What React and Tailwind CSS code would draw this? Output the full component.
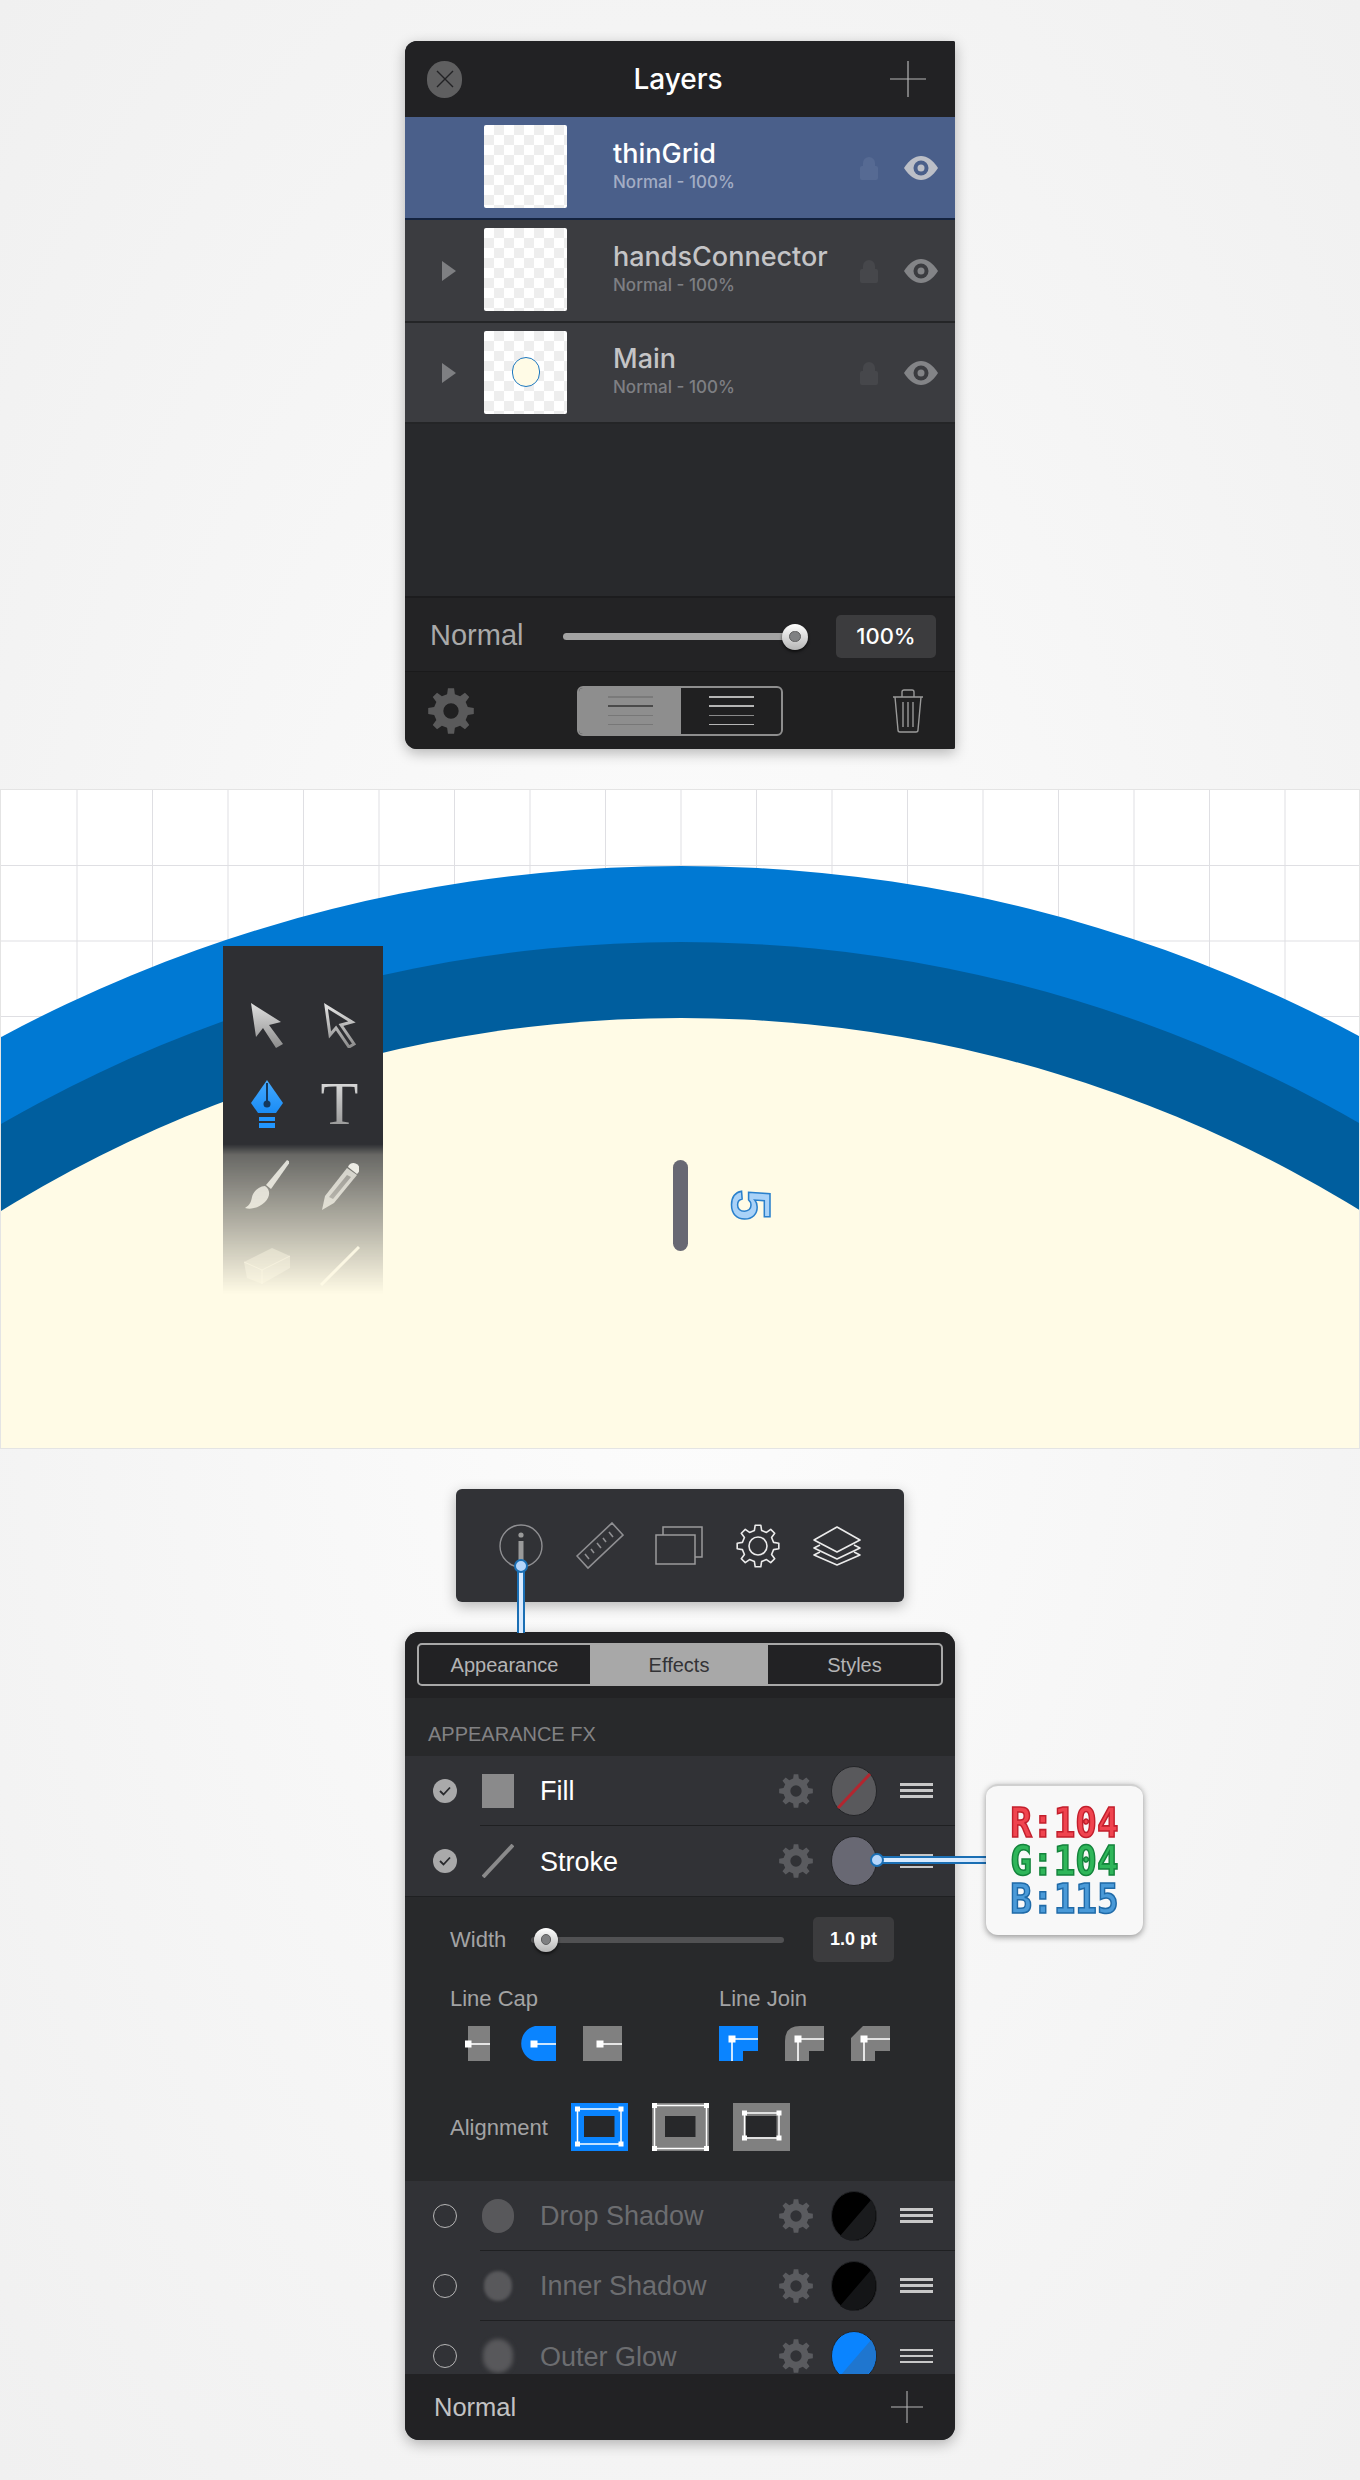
import { Fragment } from "react";

const gearPath = (teeth, outer, root, hole) => {
  const pts = [];
  const step = (Math.PI * 2) / teeth;
  for (let i = 0; i < teeth; i++) {
    const a = i * step - Math.PI / 2;
    const w = step * 0.17;
    const w2 = step * 0.29;
    [[a - w2, root], [a - w, outer], [a + w, outer], [a + w2, root]].forEach(([t, r]) => {
      pts.push(`${(Math.cos(t) * r).toFixed(2)} ${(Math.sin(t) * r).toFixed(2)}`);
    });
  }
  let d = `M${pts.join("L")}Z`;
  if (hole) d += `M${hole} 0A${hole} ${hole} 0 1 0 ${-hole} 0A${hole} ${hole} 0 1 0 ${hole} 0Z`;
  return d;
};

function Gear({ size = 34, color = "#5a5b5f" }) {
  return (
    <svg width={size} height={size} viewBox="-12 -12 24 24" className="shrink-0">
      <path d={gearPath(8, 12, 9, 4)} fill={color} fillRule="evenodd" />
    </svg>
  );
}

function Plus({ size = 36, color = "#b5b5b5" }) {
  return (
    <svg width={size} height={size} viewBox="0 0 36 36" className="shrink-0">
      <path d="M0 18H36M18 0V36" stroke={color} strokeWidth="1.2" />
    </svg>
  );
}

function Eye({ color, pupil }) {
  return (
    <svg width="34" height="24" viewBox="0 0 34 24" className="shrink-0">
      <path d="M0 12C5 4 11 0 17 0s12 4 17 12c-5 8-11 12-17 12S5 20 0 12Z" fill={color} />
      <circle cx="17" cy="12" r="7.5" fill={pupil} />
      <circle cx="17" cy="12" r="3.5" fill={color} />
    </svg>
  );
}

function Lock({ color }) {
  return (
    <svg width="18" height="24" viewBox="0 0 18 24" className="shrink-0">
      <path d="M3 10V7a6 6 0 0 1 12 0v3h1a2 2 0 0 1 2 2v10a2 2 0 0 1-2 2H2a2 2 0 0 1-2-2V12a2 2 0 0 1 2-2Z" fill={color} />
    </svg>
  );
}

function Thumb({ dot, lift }) {
  return (
    <div className={`w-[83px] h-[83px] shrink-0 rounded-[2px] flex items-center justify-center bg-[conic-gradient(#eeeeee_25%,#ffffff_0_50%,#eeeeee_0_75%,#ffffff_0)] bg-[length:20px_20px] ${lift ? "mt-[-2px]" : ""}`}>
      {dot && <div className="w-[28px] h-[30px] mt-[-2px] rounded-full bg-[#fffbe6] border-[1.5px] border-[#1d78c0]" />}
    </div>
  );
}

function LayerRow({ name, active, arrow, dot, last }) {
  return (
    <div className={`${last ? "h-[101px]" : "h-[103px]"} flex items-center border-b-2 ${active ? "bg-[#4a5f8a] border-[#14233f]" : "bg-[#3b3c40] border-[#242527]"}`}>
      <div className="w-[79px] shrink-0 pl-[37px]">
        {arrow && <div className="w-0 h-0 border-y-[10px] border-y-transparent border-l-[14px] border-l-[#7e7f82]" />}
      </div>
      <Thumb dot={dot} lift={!last} />
      <div className="flex-1 pl-[46px] pb-[4px] font-['Inter',sans-serif]">
        <div className={`text-[27px] leading-[30px] font-medium ${active ? "text-white" : "text-[#c4c4c6]"}`}>{name}</div>
        <div className={`mt-[3px] text-[17px] leading-[20px] font-medium ${active ? "text-[#a3adc4]" : "text-[#7e7f83]"}`}>Normal - 100%</div>
      </div>
      <Lock color={active ? "#566a93" : "#46474b"} />
      <div className="w-[26px]" />
      <Eye color={active ? "#bcbfc7" : "#838487"} pupil={active ? "#4a5f8a" : "#3b3c40"} />
      <div className="w-[17px]" />
    </div>
  );
}

function Knob({ size = 26, left }) {
  return (
    <div
      className="absolute top-1/2 -translate-x-1/2 -translate-y-1/2 rounded-full flex items-center justify-center bg-[linear-gradient(#ffffff,#b5b5b5)] shadow-[0_2px_3px_rgba(0,0,0,0.6)]"
      style={{ width: size, height: size, left }}
    >
      <div className="w-[45%] h-[45%] rounded-full bg-[#7f8082] border border-[#5f5f60]" />
    </div>
  );
}

function LayersPanel() {
  return (
    <div className="w-[550px] h-[708px] rounded-tl-[12px] rounded-bl-[12px] rounded-tr-[2px] rounded-br-[2px] overflow-hidden bg-[#28292c] flex flex-col shadow-[0_4px_14px_rgba(0,0,0,0.28)]">
      <div className="h-[76px] shrink-0 bg-[#222224] flex items-center justify-between pl-[22px] pr-[29px]">
        <div className="w-[35px] h-[37px] rounded-full bg-[#5f5f60] flex items-center justify-center">
          <svg width="20" height="20" viewBox="0 0 20 20"><path d="M2 2L18 18M18 2L2 18" stroke="#222224" strokeWidth="1.4" /></svg>
        </div>
        <div className="ml-[4px] text-[28px] font-medium text-white font-['Inter',sans-serif]">Layers</div>
        <Plus />
      </div>
      <LayerRow name="thinGrid" active />
      <LayerRow name="handsConnector" arrow />
      <LayerRow name="Main" arrow dot last />
      <div className="h-[174px] shrink-0 border-b-2 border-[#1c1c1e]" />
      <div className="h-[74px] shrink-0 bg-[#232325] border-b border-[#1a1a1b] flex items-center pl-[25px] pr-[19px] pt-[3px]">
        <div className="w-[133px] text-[29px] text-[#a9a9a9] font-light">Normal</div>
        <div className="relative w-[232px] h-[7px] rounded-full bg-[#a3a3a3] mt-[1px]">
          <Knob size={26} left="232px" />
        </div>
        <div className="flex-1" />
        <div className="w-[100px] h-[43px] rounded-[5px] bg-[#3c3c3e] flex items-center justify-center text-[22px] font-medium text-white font-['Inter',sans-serif]">100%</div>
      </div>
      <div className="flex-1 bg-[#202021] flex items-center pl-[23px] pr-[31px]">
        <Gear size={46} color="#5a5a5b" />
        <div className="w-[103px]" />
        <div className="w-[206px] h-[50px] rounded-[6px] border-2 border-[#8e8e8e] flex overflow-hidden">
          <div className="w-[102px] bg-[#8e8e8e] flex flex-col items-center justify-center gap-[7.5px]">
            <div className="w-[45px] h-[1.5px] bg-[#7a7a7a]" />
            <div className="w-[45px] h-[2px] bg-[#4a4a4a]" />
            <div className="w-[45px] h-[1.5px] bg-[#777777]" />
            <div className="w-[45px] h-[1.5px] bg-[#777777]" />
          </div>
          <div className="flex-1 flex flex-col items-center justify-center gap-[7.5px]">
            <div className="w-[45px] h-[1.5px] bg-[#b5b5b5]" />
            <div className="w-[45px] h-[2px] bg-[#b5b5b5]" />
            <div className="w-[45px] h-[1.5px] bg-[#8a8a8a]" />
            <div className="w-[45px] h-[1.5px] bg-[#b5b5b5]" />
          </div>
        </div>
        <div className="flex-1" />
        <svg width="32" height="44" viewBox="0 0 32 44" fill="none" stroke="#9a9a9a" strokeWidth="1.4">
          <path d="M1 8H31M10 8V3a2 2 0 0 1 2-2h8a2 2 0 0 1 2 2v5M3 8l3 33a2 2 0 0 0 2 2h16a2 2 0 0 0 2-2l3-33M11 13v25M16 13v25M21 13v25" />
        </svg>
      </div>
    </div>
  );
}

function ToolPalette() {
  return (
    <div className="absolute left-[222px] top-[156px] w-[160px] h-[348px] overflow-hidden bg-[#2e2f33] pt-[40px] grid grid-cols-[73px_73px] grid-rows-[78px_80px_82px_80px] justify-center [mask-image:linear-gradient(to_bottom,#000_57%,rgba(0,0,0,0.72)_60%,transparent_100%)]">
      <svg viewBox="0 0 34 46" width="34" height="46" className="place-self-center">
        <defs>
          <linearGradient id="metal" x1="0" y1="0" x2="0" y2="1">
            <stop offset="0" stopColor="#e0e0e0" />
            <stop offset="1" stopColor="#8c8c8c" />
          </linearGradient>
          <linearGradient id="penblue" x1="0" y1="0" x2="0" y2="1">
            <stop offset="0" stopColor="#45aaff" />
            <stop offset="1" stopColor="#1a8cf5" />
          </linearGradient>
        </defs>
        <path d="M1 1L31 20L19 23L33 42L26 46L13 26L6 35Z" fill="url(#metal)" />
      </svg>
      <svg viewBox="0 0 34 46" width="34" height="46" className="place-self-center">
        <path d="M3 4L29 20L18 23L31 42L26 45L13 26L7 33Z" fill="none" stroke="url(#metal)" strokeWidth="3" />
      </svg>
      <svg viewBox="0 0 32 48" width="32" height="48" className="place-self-center">
        <path d="M16 0L32 23L25 33H7L0 23Z" fill="url(#penblue)" />
        <path d="M16 3V22" stroke="#14385c" strokeWidth="2" />
        <circle cx="16" cy="24" r="3.5" fill="#14385c" />
        <path d="M8 37H24V41H8ZM8 43H24V48H8Z" fill="#2196ff" />
      </svg>
      <div className="place-self-center text-[62px] leading-[62px] font-['Liberation_Serif',serif] bg-linear-to-b from-[#e8e8e8] to-[#8e8e8e] bg-clip-text text-transparent mt-[-2px]">T</div>
      <svg viewBox="0 0 44 50" width="44" height="50" className="place-self-center">
        <path d="M42 0L45 2L26 29L21 25Z" fill="#cfcfcf" />
        <path d="M20 26C26 30 25 37 20 42C15 47 7 50 0 48C5 45 6 42 7 37C8 32 14 26 20 26Z" fill="#c9c9c9" />
      </svg>
      <svg viewBox="0 0 38 52" width="38" height="52" className="place-self-center">
        <path d="M26 9L36 16L13 44L1 51L4 37Z" fill="#bdbdbd" />
        <path d="M26 16L30 18L12 40L8 38Z" fill="#2e2f33" fillOpacity="0.6" />
        <path d="M28 6a6 6 0 0 1 9 8L36 15L27 8Z" fill="#e4e4e4" />
      </svg>
      <svg viewBox="0 0 46 36" width="46" height="36" className="place-self-center">
        <path d="M0 14L28 0L46 8V20L18 36L3 30Z" fill="#e8e4d4" fillOpacity="0.45" />
        <path d="M0 14L18 22L46 8M18 22V36" stroke="#fffbe6" strokeOpacity="0.5" fill="none" />
      </svg>
      <svg viewBox="0 0 40 40" width="40" height="40" className="place-self-center">
        <path d="M1 39L39 1" stroke="#e8e4d4" strokeWidth="3" />
      </svg>
    </div>
  );
}

function Canvas() {
  const vLines = Array.from({ length: 18 }, (_, i) => 76 + 75.5 * i);
  const hLines = [75.5, 151, 226.5];
  return (
    <div className="relative h-[660px] bg-white border border-[#e4e4e4] overflow-hidden">
      <svg className="absolute inset-0" width="1360" height="660" viewBox="0 0 1360 660">
        {vLines.map((x) => <line key={x} x1={x} x2={x} y1="0" y2="300" stroke="#dfdfe3" />)}
        {hLines.map((y) => <line key={y} x1="0" x2="1360" y1={y} y2={y} stroke="#dfdfe3" />)}
        <circle cx="680" cy="1513" r="1437" fill="#0079d3" />
        <circle cx="680" cy="1513" r="1361" fill="#005e9e" />
        <circle cx="680" cy="1522" r="1294" fill="#fffbe6" />
      </svg>
      <ToolPalette />
      <div className="absolute left-[672px] top-[370px] w-[15px] h-[91px] rounded-full bg-[#686873]" />
      <div className="absolute left-[728px] top-[402px] w-[43px] h-[26px] flex items-center justify-center">
        <span className="rotate-90 text-[56px] leading-none font-bold font-['Liberation_Sans',sans-serif] text-[#a9d2f8] [-webkit-text-stroke:1.5px_#2a80cc]">5</span>
      </div>
    </div>
  );
}

function RulerIcon() {
  return (
    <svg width="48" height="48" viewBox="0 0 48 48" fill="none" stroke="#8f8f92" strokeWidth="1.6">
      <path d="M1 34L36 1L47 13L12 46Z" />
      <path d="M9 32l4 5M15 27l3 4M21 21l4 5M27 16l3 4M33 10l4 5" />
    </svg>
  );
}

function Toolbar() {
  return (
    <div className="relative w-[448px] h-[113px] rounded-[6px] bg-[#313236] shadow-[0_4px_14px_rgba(0,0,0,0.28)] flex items-center pl-[25px]">
      <div className="w-[79px] flex justify-center">
        <svg width="44" height="44" viewBox="0 0 44 44" fill="none">
          <circle cx="22" cy="22" r="21" stroke="#8f8f92" strokeWidth="1.4" />
          <circle cx="22" cy="11" r="2.6" fill="#9a9a9a" />
          <path d="M19.5 17H24.5V36H19.5Z" fill="#9a9a9a" />
        </svg>
      </div>
      <div className="w-[79px] flex justify-center"><RulerIcon /></div>
      <div className="w-[79px] flex justify-center">
        <svg width="48" height="40" viewBox="0 0 48 40" fill="none" stroke="#9a9a9c" strokeWidth="1.5">
          <path d="M1 9H40V38H1Z" />
          <path d="M8 9V1H47V31H40" />
        </svg>
      </div>
      <div className="w-[79px] flex justify-center">
        <svg width="44" height="44" viewBox="-22 -22 44 44" fill="none" stroke="#ebebeb" strokeWidth="1.6">
          <path d={gearPath(8, 21, 16, 0)} strokeLinejoin="round" />
          <circle r="9" />
        </svg>
      </div>
      <div className="w-[79px] flex justify-center">
        <svg width="48" height="40" viewBox="0 0 48 40" fill="none" stroke="#ebebeb" strokeWidth="1.6" strokeLinejoin="round">
          <path d="M24 1L47 14L24 26L1 14Z" />
          <path d="M7 19L1 22L24 33L47 22L41 19" />
          <path d="M7 26L1 29L24 39L47 29L41 26" />
        </svg>
      </div>
      <div className="absolute left-[61px] top-[76px] w-[8px] h-[68px] bg-[#d9ebff] border-x-2 border-[#1b6fb4] z-10">
        <div className="absolute left-[-5px] top-[-6px] w-[14px] h-[14px] rounded-full bg-[#b5d6fb] border-2 border-[#1b6fb4]" />
      </div>
    </div>
  );
}

function Lines() {
  return (
    <div className="w-[33px] shrink-0 flex flex-col gap-[3.5px]">
      <div className="h-[2.5px] bg-[#c8c8c8]" />
      <div className="h-[2.5px] bg-[#c8c8c8]" />
      <div className="h-[2.5px] bg-[#c8c8c8]" />
    </div>
  );
}

function Swatch({ color, alt, slash }) {
  return (
    <svg width="46" height="50" viewBox="0 0 46 50" className="shrink-0">
      <ellipse cx="23" cy="25" rx="22.5" ry="24.5" fill={color} stroke="#232427" strokeWidth="1" />
      {alt && <path d="M40 9A23 25 0 0 1 9 45Z" fill={alt} />}
      {slash && <path d="M39 8L7 42" stroke="#b3262f" strokeWidth="3" />}
    </svg>
  );
}

function FxRow({ label, on, icon, swatch, last }) {
  return (
    <div className="h-[70px] flex bg-[#313236]">
      <div className="w-[75px] shrink-0 flex items-center pl-[28px]">
        {on ? (
          <div className="w-[24px] h-[24px] rounded-full bg-[#a9a9aa] flex items-center justify-center">
            <svg width="12" height="10" viewBox="0 0 12 10" fill="none"><path d="M1 5L4.5 8.5L11 1.5" stroke="#28292c" strokeWidth="1.8" /></svg>
          </div>
        ) : (
          <div className="w-[24px] h-[24px] rounded-full border-[1.5px] border-[#b5b5b5]" />
        )}
      </div>
      <div className={`flex-1 flex items-center ${last ? "" : "border-b border-[#1f2022]"}`}>
        <div className="w-[35px] shrink-0 flex justify-center">{icon}</div>
        <div className="w-[25px]" />
        <div className={`flex-1 pt-[2px] text-[27px] ${on ? "text-white" : "text-[#6c6d70]"}`}>{label}</div>
        <Gear size={34} />
        <div className="w-[18px]" />
        {swatch}
        <div className="w-[23px]" />
        <Lines />
        <div className="w-[22px]" />
      </div>
    </div>
  );
}

const handle = (x, y, key) => <rect key={key} x={x - 2.5} y={y - 2.5} width="5" height="5" fill="#fff" />;

function CapIcon({ d, fill, sq, w }) {
  return (
    <svg width={w} height="35" viewBox={`0 0 ${w} 35`} className="shrink-0">
      <path d={d} fill={fill} />
      <path d={`M${sq} 18H${w}`} stroke="#fff" strokeWidth="1.6" />
      <rect x={sq - 3.5} y="14.5" width="7" height="7" fill="#fff" />
    </svg>
  );
}

function JoinIcon({ d, fill }) {
  return (
    <svg width="39" height="35" viewBox="0 0 39 35" className="shrink-0">
      <path d={d} fill={fill} />
      <path d="M13 35V13H39" stroke="#fff" strokeWidth="1.6" fill="none" />
      <rect x="9.5" y="9.5" width="7" height="7" fill="#fff" />
    </svg>
  );
}

function AlignIcon({ fill, x1, y1, x2, y2 }) {
  return (
    <svg width="57" height="48" viewBox="0 0 57 48" className="shrink-0">
      <rect x="0" y="0" width="57" height="48" fill={fill} />
      <rect x="13" y="13" width="30.5" height="21" fill="#27282a" />
      <rect x={x1} y={y1} width={x2 - x1} height={y2 - y1} fill="none" stroke="#fff" strokeWidth="1.5" />
      {[[x1, y1], [x2, y1], [x1, y2], [x2, y2]].map(([x, y], i) => handle(x, y, i))}
    </svg>
  );
}

function StrokeSettings() {
  return (
    <div className="h-[285px] bg-[#28292b] pl-[45px] border-t border-[#1f2022] flex flex-col">
      <div className="h-[45px] mt-[20px] flex items-center">
        <div className="w-[81px] text-[22px] text-[#a3a3a4]">Width</div>
        <div className="relative w-[253px] h-[6px] rounded-full bg-[#515153]">
          <Knob size={24} left="15px" />
        </div>
        <div className="w-[29px]" />
        <div className="w-[81px] h-[45px] rounded-[5px] bg-[#3c3c3e] flex items-center justify-center text-[18px] font-bold text-white">1.0 pt</div>
      </div>
      <div className="flex mt-[23px]">
        <div className="w-[269px]">
          <div className="text-[22px] leading-[28px] text-[#a3a3a4]">Line Cap</div>
          <div className="flex mt-[13px] pl-[15px] gap-[27px]">
            <CapIcon w={25} d="M3 0H25V35H3Z" fill="#808080" sq={3} />
            <CapIcon w={39} d="M39 0H18A18 18 0 0 0 18 35H39Z" fill="#0a84ff" sq={17} />
            <CapIcon w={39} d="M0 0H39V35H0Z" fill="#808080" sq={17} />
          </div>
        </div>
        <div>
          <div className="text-[22px] leading-[28px] text-[#a3a3a4]">Line Join</div>
          <div className="flex mt-[13px] gap-[27px]">
            <JoinIcon d="M0 0H39V25H24V35H0Z" fill="#0a84ff" />
            <JoinIcon d="M0 35V15Q0 0 15 0H39V25H24V35Z" fill="#808080" />
            <JoinIcon d="M0 35V12L12 0H39V25H24V35Z" fill="#808080" />
          </div>
        </div>
      </div>
      <div className="flex items-center mt-[42px]">
        <div className="w-[121px] text-[22px] text-[#a3a3a4]">Alignment</div>
        <div className="flex gap-[24px]">
          <AlignIcon fill="#0a84ff" x1={6.5} y1={6} x2={50} y2={41} />
          <AlignIcon fill="#808080" x1={2.5} y1={2.5} x2={54.5} y2={45.5} />
          <AlignIcon fill="#808080" x1={11.5} y1={10} x2={46} y2={35} />
        </div>
      </div>
    </div>
  );
}

function EffectsPanel() {
  return (
    <div className="relative w-[550px] h-[808px]">
      <div className="w-full h-full rounded-[14px] overflow-hidden bg-[#28292b] flex flex-col shadow-[0_4px_14px_rgba(0,0,0,0.28)]">
        <div className="h-[66px] shrink-0 bg-[#222224] px-[12px] pt-[11px]">
          <div className="h-[43px] rounded-[5px] border-2 border-[#a8a8a8] flex text-[20px] overflow-hidden">
            <div className="w-[171px] flex items-center justify-center text-[#b4b4b5]">Appearance</div>
            <div className="w-[178px] bg-[#a8a8a8] flex items-center justify-center text-[#333336]">Effects</div>
            <div className="flex-1 flex items-center justify-center text-[#b4b4b5]">Styles</div>
          </div>
        </div>
        <div className="h-[58px] shrink-0 flex items-center pl-[23px] pt-[14px] text-[20px] text-[#828284]">APPEARANCE FX</div>
        <FxRow
          label="Fill"
          on
          icon={<div className="w-[32px] h-[34px] bg-[#8a8a8b]" />}
          swatch={<Swatch color="#59595c" slash />}
        />
        <FxRow
          label="Stroke"
          on
          last
          icon={<svg width="32" height="34" viewBox="0 0 32 34"><path d="M1 33L31 1" stroke="#8a8a8b" strokeWidth="4" /></svg>}
          swatch={<Swatch color="#686873" />}
        />
        <StrokeSettings />
        <FxRow
          label="Drop Shadow"
          icon={<div className="w-[32px] h-[34px] rounded-full bg-[#58585b]" />}
          swatch={<Swatch color="#000000" alt="#1a1b1d" />}
        />
        <FxRow
          label="Inner Shadow"
          icon={<div className="w-[28px] h-[30px] rounded-full bg-[#58585b] blur-[1.5px]" />}
          swatch={<Swatch color="#000000" alt="#141517" />}
        />
        <div className="flex-1 overflow-hidden">
          <FxRow
            label="Outer Glow"
            last
            icon={<div className="w-[30px] h-[34px] rounded-full bg-[#58585b] blur-[2px]" />}
            swatch={<Swatch color="#0a84ff" alt="#1f76cf" />}
          />
        </div>
        <div className="h-[66px] shrink-0 bg-[#222224] flex items-center justify-between pl-[29px] pr-[32px]">
          <div className="text-[25.5px] text-[#c2c2c3]">Normal</div>
          <Plus size={32} />
        </div>
      </div>
      <div className="absolute left-[471px] top-[224px] w-[112px] h-[8px] bg-[#d9ebff] border-y-2 border-[#1b6fb4]">
        <div className="absolute left-[-6px] top-[-5px] w-[14px] h-[14px] rounded-full bg-[#b5d6fb] border-2 border-[#1b6fb4]" />
      </div>
      <div className="absolute left-[581px] top-[152px] w-[157px] h-[151px] rounded-[12px] bg-[#f8f8f8] border-t-2 border-[#d0d0d0] shadow-[0_2px_6px_rgba(0,0,0,0.4)] flex flex-col items-center justify-center gap-[5px] font-['DejaVu_Sans_Mono',monospace] font-bold text-[36px] leading-[33px]">
        {[
          ["R:104", "text-[#f0444f] [-webkit-text-stroke:1.4px_#c21f2c]"],
          ["G:104", "text-[#2fb65a] [-webkit-text-stroke:1.4px_#14843c]"],
          ["B:115", "text-[#4a9ad8] [-webkit-text-stroke:1.4px_#1f6aa8]"],
        ].map(([t, c]) => (
          <Fragment key={t}>
            <div className={`scale-y-[1.15] ${c}`}>{t}</div>
          </Fragment>
        ))}
      </div>
    </div>
  );
}

export default function App() {
  return (
    <div className="w-[1360px] h-[2480px] overflow-hidden font-['Liberation_Sans',sans-serif] bg-[radial-gradient(ellipse_at_center,#fdfdfd_0%,#f0f0f0_100%)]">
      <div className="h-[789px] pt-[41px] flex justify-center">
        <LayersPanel />
      </div>
      <Canvas />
      <div className="pt-[40px] flex justify-center">
        <Toolbar />
      </div>
      <div className="pt-[30px] flex justify-center">
        <EffectsPanel />
      </div>
    </div>
  );
}
